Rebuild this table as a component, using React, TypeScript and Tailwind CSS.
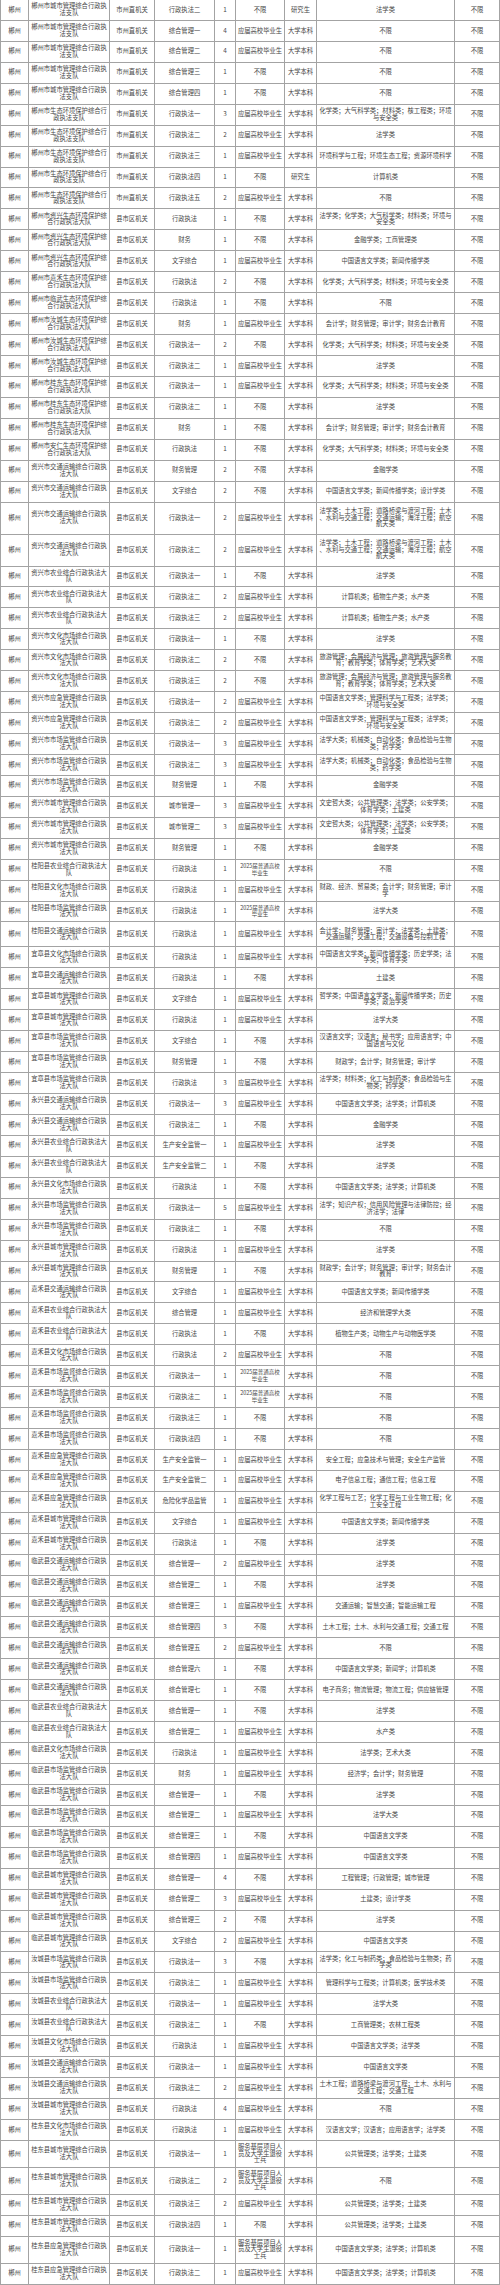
import React from "react";

// 列：地区 | 单位 | 层级 | 职位 | 人数 | 对象 | 学历 | 专业 | 其他
const COLS =
  "grid grid-cols-[29px_81px_45px_60px_21px_49px_32px_138px_45px]";

const SHORT: Record<string, string> = {
  S: "市州直机关",
  X: "县市区机关",
  U: "应届高校毕业生",
  G: "2025届普通高校\n毕业生",
  F: "服务基层项目人员及大学生退役士兵",
  B: "大学本科",
  Y: "研究生",
};

const HEIGHTS: Record<string, string> = {
  "": "h-[20.94px]",
  "25": "h-[25px]",
  "27": "h-[27px]",
  "32": "h-[32px]",
};

const ZX_SH = "郴州市资兴生态环境保护综合行政执法大队";
const RC_SH = "郴州市汝城生态环境保护综合行政执法大队";
const GD_SH = "郴州市桂东生态环境保护综合行政执法大队";
const SZ_SH = "郴州市生态环境保护综合行政执法支队";
const SZ_CG = "郴州市城市管理综合行政执法支队";

const RAW = [
  `${SZ_CG}|S|行政执法二|1|不限|Y|法学类`,
  `${SZ_CG}|S|综合管理一|4|U|B|不限`,
  `${SZ_CG}|S|综合管理二|4|U|B|不限`,
  `${SZ_CG}|S|综合管理三|1|不限|B|不限`,
  `${SZ_CG}|S|综合管理四|1|不限|B|不限`,
  `${SZ_SH}|S|行政执法一|3|U|B|化学类；大气科学类；材料类；核工程类；环境与安全类`,
  `${SZ_SH}|S|行政执法二|2|U|B|法学类`,
  `${SZ_SH}|S|行政执法三|1|U|B|环境科学与工程；环境生态工程；资源环境科学`,
  `${SZ_SH}|S|行政执法四|1|不限|Y|计算机类`,
  `${SZ_SH}|S|行政执法五|2|U|B|不限`,
  `${ZX_SH}|X|行政执法|1|不限|B|法学类；化学类；大气科学类；材料类；环境与安全类`,
  `${ZX_SH}|X|财务|1|不限|B|金融学类；工商管理类`,
  `${ZX_SH}|X|文字综合|1|U|B|中国语言文学类；新闻传播学类`,
  `郴州市嘉禾生态环境保护综合行政执法大队|X|行政执法|2|不限|B|化学类；大气科学类；材料类；环境与安全类`,
  `郴州市临武生态环境保护综合行政执法大队|X|行政执法|1|不限|B|不限`,
  `${RC_SH}|X|财务|1|U|B|会计学；财务管理；审计学；财务会计教育`,
  `${RC_SH}|X|行政执法一|2|不限|B|化学类；大气科学类；材料类；环境与安全类`,
  `${RC_SH}|X|行政执法二|1|U|B|法学类`,
  `${GD_SH}|X|行政执法一|1|U|B|化学类；大气科学类；材料类；环境与安全类`,
  `${GD_SH}|X|行政执法二|1|不限|B|法学类`,
  `${GD_SH}|X|财务|1|不限|B|会计学；财务管理；审计学；财务会计教育`,
  `郴州市安仁生态环境保护综合行政执法大队|X|行政执法|1|不限|B|化学类；大气科学类；材料类；环境与安全类`,
  `资兴市交通运输综合行政执法大队|X|财务管理|2|不限|B|金融学类`,
  `资兴市交通运输综合行政执法大队|X|文字综合|2|不限|B|中国语言文学类；新闻传播学类；设计学类`,
  `资兴市交通运输综合行政执法大队|X|行政执法一|2|U|B|法学类；土木工程；道路桥梁与渡河工程；土木、水利与交通工程；交通运输；海洋工程；航空航天类|32`,
  `资兴市交通运输综合行政执法大队|X|行政执法二|2|U|B|法学类；土木工程；道路桥梁与渡河工程；土木、水利与交通工程；交通运输；海洋工程；航空航天类|32`,
  `资兴市农业综合行政执法大队|X|行政执法一|1|不限|B|法学类`,
  `资兴市农业综合行政执法大队|X|行政执法二|2|U|B|计算机类；植物生产类；水产类`,
  `资兴市农业综合行政执法大队|X|行政执法三|2|U|B|计算机类；植物生产类；水产类`,
  `资兴市文化市场综合行政执法大队|X|行政执法一|1|不限|B|法学类`,
  `资兴市文化市场综合行政执法大队|X|行政执法二|2|不限|B|旅游管理；会展经济与管理；旅游管理与服务教育；教育学类；体育学类；艺术大类`,
  `资兴市文化市场综合行政执法大队|X|行政执法三|2|不限|B|旅游管理；会展经济与管理；旅游管理与服务教育；教育学类；体育学类；艺术大类`,
  `资兴市应急管理综合行政执法大队|X|行政执法一|2|U|B|中国语言文学类；管理科学与工程类；法学类；环境与安全类`,
  `资兴市应急管理综合行政执法大队|X|行政执法二|2|U|B|中国语言文学类；管理科学与工程类；法学类；环境与安全类`,
  `资兴市市场监管综合行政执法大队|X|行政执法一|3|U|B|法学大类；机械类；自动化类；食品检验与生物类；药学类`,
  `资兴市市场监管综合行政执法大队|X|行政执法二|3|U|B|法学大类；机械类；自动化类；食品检验与生物类；药学类`,
  `资兴市市场监管综合行政执法大队|X|财务管理|1|不限|B|金融学类`,
  `资兴市城市管理综合行政执法大队|X|城市管理一|3|U|B|文史哲大类；公共管理类；法学类；公安学类；体育学类；土建类`,
  `资兴市城市管理综合行政执法大队|X|城市管理二|3|U|B|文史哲大类；公共管理类；法学类；公安学类；体育学类；土建类`,
  `资兴市城市管理综合行政执法大队|X|财务管理|1|不限|B|金融学类`,
  `桂阳县农业综合行政执法大队|X|行政执法|1|G|B|不限`,
  `桂阳县文化市场综合行政执法大队|X|行政执法|1|U|B|财政、经济、贸易类；会计学；财务管理；审计学`,
  `桂阳县市场监管综合行政执法大队|X|行政执法|1|G|B|法学大类`,
  `桂阳县交通运输综合行政执法大队|X|行政执法|1|U|B|会计学；财务管理；审计学；法学类；土建类；交通运输；交通工程；交通设备与控制工程|25`,
  `宜章县文化市场综合行政执法大队|X|行政执法|1|U|B|中国语言文学类；新闻传播学类；历史学类；法学类；体育学类`,
  `宜章县交通运输综合行政执法大队|X|行政执法|1|不限|B|土建类`,
  `宜章县城市管理综合行政执法大队|X|文字综合|1|U|B|哲学类；中国语言文学类；新闻传播学类；历史学类；政治学类`,
  `宜章县城市管理综合行政执法大队|X|行政执法|1|U|B|法学大类`,
  `宜章县市场监管综合行政执法大队|X|文字综合|1|不限|B|汉语言文学；汉语言；秘书学；应用语言学；中国语言与文化`,
  `宜章县市场监管综合行政执法大队|X|财务管理|1|不限|B|财政学；会计学；财务管理；审计学`,
  `宜章县市场监管综合行政执法大队|X|行政执法|3|U|B|法学类；材料类；化工与制药类；食品检验与生物类；药学类`,
  `永兴县交通运输综合行政执法大队|X|行政执法一|3|U|B|中国语言文学类；法学类；计算机类`,
  `永兴县交通运输综合行政执法大队|X|行政执法二|1|不限|B|金融学类`,
  `永兴县农业综合行政执法大队|X|生产安全监管一|1|U|B|法学类`,
  `永兴县农业综合行政执法大队|X|生产安全监管二|1|不限|B|法学类`,
  `永兴县文化市场综合行政执法大队|X|行政执法|1|不限|B|中国语言文学类；法学类；计算机类`,
  `永兴县市场监管综合行政执法大队|X|行政执法一|5|U|B|法学；知识产权；信用风险管理与法律防控；经济法学；法律`,
  `永兴县市场监管综合行政执法大队|X|行政执法二|1|不限|B|不限`,
  `永兴县城市管理综合行政执法大队|X|行政执法|1|U|B|法学类`,
  `永兴县城市管理综合行政执法大队|X|财务管理|1|不限|B|财政学；会计学；财务管理；审计学；财务会计教育`,
  `嘉禾县交通运输综合行政执法大队|X|文字综合|1|U|B|中国语言文学类；新闻传播学类`,
  `嘉禾县农业综合行政执法大队|X|综合管理|1|U|B|经济和管理学大类`,
  `嘉禾县农业综合行政执法大队|X|行政执法|1|不限|B|植物生产类；动物生产与动物医学类`,
  `嘉禾县文化市场综合行政执法大队|X|行政执法|2|U|B|不限`,
  `嘉禾县市场监督综合行政执法大队|X|行政执法一|1|G|B|不限`,
  `嘉禾县市场监督综合行政执法大队|X|行政执法二|1|G|B|不限`,
  `嘉禾县市场监督综合行政执法大队|X|行政执法三|1|不限|B|不限`,
  `嘉禾县市场监督综合行政执法大队|X|行政执法四|1|不限|B|不限`,
  `嘉禾县应急管理综合行政执法大队|X|生产安全监管一|1|U|B|安全工程；应急技术与管理；安全生产监管`,
  `嘉禾县应急管理综合行政执法大队|X|生产安全监管二|1|U|B|电子信息工程；通信工程；信息工程`,
  `嘉禾县应急管理综合行政执法大队|X|危险化学品监管|1|U|B|化学工程与工艺；化学工程与工业生物工程；化工安全工程`,
  `嘉禾县城市管理综合行政执法大队|X|文字综合|1|U|B|中国语言文学类；新闻传播学类`,
  `嘉禾县城市管理综合行政执法大队|X|行政执法|1|不限|B|法学类`,
  `临武县交通运输综合行政执法大队|X|综合管理一|2|U|B|法学类`,
  `临武县交通运输综合行政执法大队|X|综合管理二|1|不限|B|法学类`,
  `临武县交通运输综合行政执法大队|X|综合管理三|1|U|B|交通运输；智慧交通；智能运输工程`,
  `临武县交通运输综合行政执法大队|X|综合管理四|3|不限|B|土木工程；土木、水利与交通工程；交通工程`,
  `临武县交通运输综合行政执法大队|X|综合管理五|2|U|B|不限`,
  `临武县交通运输综合行政执法大队|X|综合管理六|1|不限|B|中国语言文学类；新闻学；计算机类`,
  `临武县交通运输综合行政执法大队|X|综合管理七|1|不限|B|电子商务；物流管理；物流工程；供应链管理`,
  `临武县农业综合行政执法大队|X|综合管理一|1|不限|B|法学类`,
  `临武县农业综合行政执法大队|X|综合管理二|1|U|B|水产类`,
  `临武县文化市场综合行政执法大队|X|行政执法|1|U|B|法学类；艺术大类`,
  `临武县市场监管综合行政执法大队|X|财务|1|U|B|经济学；会计学；财务管理`,
  `临武县市场监管综合行政执法大队|X|综合管理一|1|不限|B|法学类`,
  `临武县市场监管综合行政执法大队|X|综合管理二|1|U|B|法学大类`,
  `临武县市场监管综合行政执法大队|X|综合管理三|1|不限|B|中国语言文学类`,
  `临武县市场监管综合行政执法大队|X|综合管理四|1|U|B|中国语言文学类`,
  `临武县城市管理综合行政执法大队|X|综合管理一|4|不限|B|工程管理；行政管理；城市管理`,
  `临武县城市管理综合行政执法大队|X|综合管理二|3|U|B|土建类；设计学类`,
  `临武县城市管理综合行政执法大队|X|综合管理三|2|不限|B|法学类`,
  `临武县城市管理综合行政执法大队|X|文字综合|2|U|B|中国语言文学类`,
  `汝城县市场监管综合行政执法大队|X|行政执法一|3|不限|B|法学类；化工与制药类；食品检验与生物类；药学类`,
  `汝城县市场监管综合行政执法大队|X|行政执法二|1|U|B|管理科学与工程类；计算机类；医学技术类`,
  `汝城县农业综合行政执法大队|X|行政执法一|1|U|B|法学大类`,
  `汝城县农业综合行政执法大队|X|行政执法二|1|不限|B|工商管理类；农林工程类`,
  `汝城县文化市场综合行政执法大队|X|行政执法|1|U|B|中国语言文学类；法学类`,
  `汝城县交通运输综合行政执法大队|X|行政执法一|1|U|B|中国语言文学类`,
  `汝城县交通运输综合行政执法大队|X|行政执法二|2|U|B|土木工程；道路桥梁与渡河工程；土木、水利与交通工程；交通工程`,
  `汝城县城市管理综合行政执法大队|X|行政执法|4|U|B|不限`,
  `桂东县文化市场综合行政执法大队|X|行政执法|1|U|B|汉语言文学；汉语言；应用语言学；法学类`,
  `桂东县城市管理综合行政执法大队|X|行政执法一|1|F|B|公共管理类；法学类；土建类|27`,
  `桂东县城市管理综合行政执法大队|X|行政执法二|2|F|B|不限|27`,
  `桂东县城市管理综合行政执法大队|X|行政执法三|2|U|B|公共管理类；法学类；土建类`,
  `桂东县城市管理综合行政执法大队|X|行政执法四|1|不限|B|公共管理类；法学类；土建类`,
  `桂东县应急管理综合行政执法大队|X|行政执法一|1|F|B|中国语言文学类；法学类；计算机类|27`,
  `桂东县应急管理综合行政执法大队|X|行政执法二|1|U|B|中国语言文学类；法学类；计算机类`,
];

const cell =
  "flex items-center justify-center text-center whitespace-pre-line border-r border-b border-[#a3a3a3] px-[1px] [line-break:anywhere]";

function Row({ line }: { line: string }) {
  const [org, level, post, num, source, edu, major, h = ""] = line.split("|");
  const fields = [
    "郴州",
    org,
    SHORT[level] ?? level,
    post,
    num,
    SHORT[source] ?? source,
    SHORT[edu] ?? edu,
    major,
    "不限",
  ];
  return (
    <div className={`${COLS} ${HEIGHTS[h]}`}>
      {fields.map((text, i) => {
        let cls = cell;
        if (i === 0) cls = `${cell} border-l`;
        // 2025届… 数字较宽，略缩小字号以免溢出
        if (i === 5 && source === "G") cls = `${cell} text-[5.5px]`;
        return (
          <div key={i} className={cls}>
            {text}
          </div>
        );
      })}
    </div>
  );
}

export default function App() {
  return (
    <div className="w-[500px] bg-white text-[#474747] text-[6.3px] leading-[6.7px] font-['Noto_Sans_CJK_SC','Noto_Sans_CJK_JP',sans-serif]">
      {RAW.map((line, i) => (
        <Row key={i} line={line} />
      ))}
    </div>
  );
}
